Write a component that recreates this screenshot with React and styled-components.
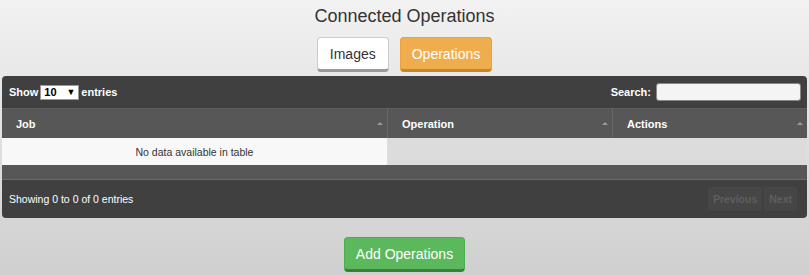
import styled, { createGlobalStyle } from "styled-components";

const GlobalStyle = createGlobalStyle`
    html, body {
        margin: 0;
        height: 275px;
        overflow: hidden;
    }
    body {
        background: linear-gradient(to bottom, #f2f2f2 0%, #cfcfcf 100%);
        font-family: "Liberation Sans", Arial, sans-serif;
    }
`;

const Page = styled.div`
    display: flex;
    flex-direction: column;
    align-items: center;
    padding: 0 2px;
`;
const Title = styled.h1`
    margin: 6px 0 0;
    font-size: 18px;
    line-height: 20px;
    font-weight: 400;
    color: #333;
`;
const Tabs = styled.div`
    display: flex;
    gap: 11px;
    margin-top: 11px;
`;
const Button = styled.button`
    height: 35px;
    padding: 0 ${(p) => p.$pad || 12}px;
    font-family: inherit;
    font-size: 14px;
    border-radius: 4px;
    border: 1px solid ${(p) => p.$border};
    border-bottom: 3px solid ${(p) => p.$shadow};
    background: ${(p) => p.$bg};
    color: ${(p) => p.$color};
    cursor: pointer;
`;
const Panel = styled.div`
    align-self: stretch;
    margin-top: 4px;
    border-radius: 4px;
    overflow: hidden;
    background: #404040;
`;
const Toolbar = styled.div`
    height: 32px;
    display: flex;
    align-items: center;
    justify-content: space-between;
    padding: 0 6px 0 7px;
    color: #fff;
    font-size: 11px;
    font-weight: 700;
`;
const Length = styled.label`
    display: flex;
    align-items: center;
    gap: 2px;
`;
const Select = styled.span`
    display: inline-flex;
    align-items: center;
    justify-content: space-between;
    width: 39px;
    height: 15px;
    padding: 0 3px;
    box-sizing: border-box;
    background: #fff;
    border: 1px solid #999;
    color: #000;
    font-size: 11px;
    font-weight: 700;
    span {
        font-size: 9px;
    }
`;
const SearchLabel = styled.label`
    display: flex;
    align-items: center;
    gap: 5px;
`;
const SearchInput = styled.input`
    width: 145px;
    height: 18px;
    box-sizing: border-box;
    border: 1px solid #888;
    border-radius: 3px;
    background: #f4f4f4;
`;
const Grid = styled.div`
    display: grid;
    grid-template-columns: 385px 225px 1fr;
`;
const Head = styled.div`
    height: 30px;
    display: flex;
    align-items: center;
    justify-content: space-between;
    padding: 0 4px 0 14px;
    background: #575757;
    border-top: 1px solid #5e5e5e;
    border-left: ${(p) => (p.$first ? "none" : "1px solid #676767")};
    box-sizing: border-box;
    color: #fff;
    font-size: 11px;
    font-weight: 700;
`;
const SortArrow = styled.span`
    width: 0;
    height: 0;
    border-left: 3px solid transparent;
    border-right: 3px solid transparent;
    border-bottom: 3px solid #9a9a9a;
`;
const Cell = styled.div`
    height: 27px;
    display: flex;
    align-items: center;
    justify-content: center;
    background: ${(p) => (p.$light ? "#f8f8f8" : "#dcdcdc")};
    color: #333;
    font-size: 10.5px;
`;
const Strip = styled.div`
    height: 14px;
    background: #575757;
    border-bottom: 1px solid #6a6a6a;
`;
const Footer = styled.div`
    height: 38px;
    display: flex;
    align-items: center;
    justify-content: space-between;
    padding: 0 10px 0 7px;
    color: #fff;
    font-size: 10.5px;
`;
const Pager = styled.div`
    display: flex;
    gap: 2px;
`;
const PageButton = styled.span`
    height: 24px;
    display: flex;
    align-items: center;
    padding: 0 5px;
    border-radius: 2px;
    background: #464646;
    color: #5e5e5e;
    font-weight: 700;
`;
const Actions = styled.div`
    margin-top: 19px;
`;

const columns = ["Job", "Operation", "Actions"];

const App = () => {
    return (
        <>
            <GlobalStyle />
            <Page>
                <Title>Connected Operations</Title>
                <Tabs>
                    <Button $bg="#fff" $color="#333" $border="#ccc" $shadow="#999" $pad={12}>
                        Images
                    </Button>
                    <Button $bg="#f0ad4e" $color="#fff" $border="#eea236" $shadow="#c8862a" $pad={11}>
                        Operations
                    </Button>
                </Tabs>
                <Panel>
                    <Toolbar>
                        <Length>
                            Show
                            <Select>
                                10<span>▼</span>
                            </Select>
                            entries
                        </Length>
                        <SearchLabel>
                            Search:
                            <SearchInput type="search" />
                        </SearchLabel>
                    </Toolbar>
                    <Grid>
                        {columns.map((c, i) => (
                            <Head key={c} $first={i === 0}>
                                {c}
                                <SortArrow />
                            </Head>
                        ))}
                        <Cell $light>No data available in table</Cell>
                        <Cell />
                        <Cell />
                    </Grid>
                    <Strip />
                    <Footer>
                        Showing 0 to 0 of 0 entries
                        <Pager>
                            <PageButton>Previous</PageButton>
                            <PageButton>Next</PageButton>
                        </Pager>
                    </Footer>
                </Panel>
                <Actions>
                    <Button $bg="#5cb85c" $color="#fff" $border="#4cae4c" $shadow="#3a803a" $pad={11}>
                        Add Operations
                    </Button>
                </Actions>
            </Page>
        </>
    );
};

export default App;
